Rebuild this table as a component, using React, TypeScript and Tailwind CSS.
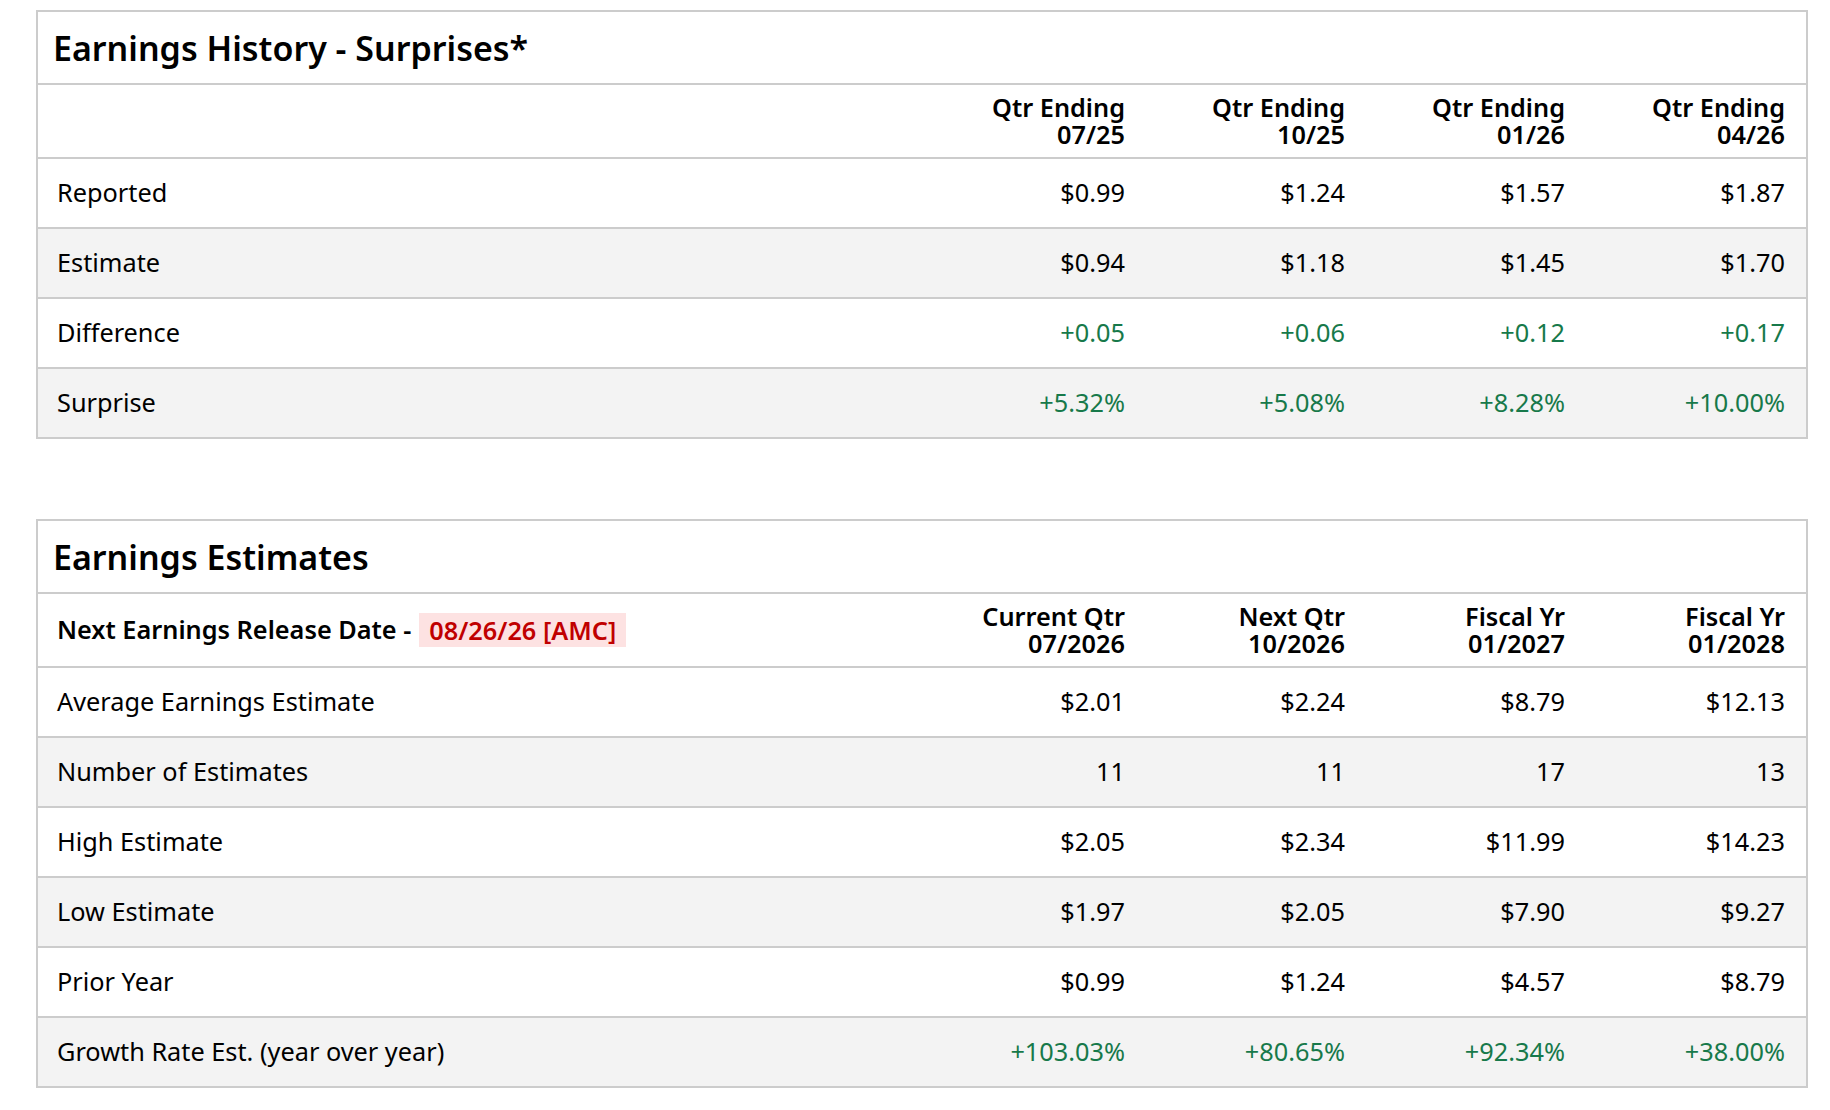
import React from "react";

type Row = { label: string; values: string[]; green?: boolean };

const history: Row[] = [
  { label: "Reported", values: ["$0.99", "$1.24", "$1.57", "$1.87"] },
  { label: "Estimate", values: ["$0.94", "$1.18", "$1.45", "$1.70"] },
  { label: "Difference", values: ["+0.05", "+0.06", "+0.12", "+0.17"], green: true },
  { label: "Surprise", values: ["+5.32%", "+5.08%", "+8.28%", "+10.00%"], green: true },
];

const estimates: Row[] = [
  { label: "Average Earnings Estimate", values: ["$2.01", "$2.24", "$8.79", "$12.13"] },
  { label: "Number of Estimates", values: ["11", "11", "17", "13"] },
  { label: "High Estimate", values: ["$2.05", "$2.34", "$11.99", "$14.23"] },
  { label: "Low Estimate", values: ["$1.97", "$2.05", "$7.90", "$9.27"] },
  { label: "Prior Year", values: ["$0.99", "$1.24", "$4.57", "$8.79"] },
  {
    label: "Growth Rate Est. (year over year)",
    values: ["+103.03%", "+80.65%", "+92.34%", "+38.00%"],
    green: true,
  },
];

function HeaderCell({ top, bottom }: { top: string; bottom: string }) {
  return (
    <div className="flex flex-col items-end justify-center pr-[21px] text-right font-semibold leading-[27px]">
      <span>{top}</span>
      <span>{bottom}</span>
    </div>
  );
}

function DataRows({ rows }: { rows: Row[] }) {
  return (
    <>
      {rows.map((row, i) => {
        const last = i === rows.length - 1;
        return (
          <div
            key={row.label}
            className={
              "grid grid-cols-[1fr_220px_220px_220px_220px] " +
              (last ? "h-[68px] " : "h-[70px] border-b-2 border-[#cccccc] ") +
              (i % 2 === 1 ? "bg-[#f3f3f3]" : "bg-white")
            }
          >
            <div className="flex items-center pl-[19px]">{row.label}</div>
            {row.values.map((v, j) => (
              <div
                key={j}
                className={
                  "flex items-center justify-end pr-[21px] " +
                  (row.green ? "text-[#17794a]" : "text-black")
                }
              >
                {v}
              </div>
            ))}
          </div>
        );
      })}
    </>
  );
}

function Panel({
  title,
  header,
  rows,
  className,
}: {
  title: string;
  header: React.ReactNode;
  rows: Row[];
  className?: string;
}) {
  return (
    <section className={"border-2 border-[#cccccc] bg-white " + (className ?? "")}>
      <div className="flex h-[73px] items-center border-b-2 border-[#cccccc] pl-[15px]">
        <h2 className="text-[34px] font-semibold leading-none">{title}</h2>
      </div>
      <div className="grid h-[74px] grid-cols-[1fr_220px_220px_220px_220px] border-b-2 border-[#cccccc]">
        {header}
      </div>
      <DataRows rows={rows} />
    </section>
  );
}

export default function App() {
  return (
    <div
      className="min-h-screen w-[1830px] bg-white text-[25.3px] text-black"
      style={{ fontFamily: '"Noto Sans", "Open Sans", sans-serif' }}
    >
      <div className="ml-[36px] w-[1772px] pt-[10px]">
        <Panel
          title="Earnings History - Surprises*"
          rows={history}
          header={
            <>
              <div />
              <HeaderCell top="Qtr Ending" bottom="07/25" />
              <HeaderCell top="Qtr Ending" bottom="10/25" />
              <HeaderCell top="Qtr Ending" bottom="01/26" />
              <HeaderCell top="Qtr Ending" bottom="04/26" />
            </>
          }
        />

        <Panel
          className="mt-[80px]"
          title="Earnings Estimates"
          rows={estimates}
          header={
            <>
              <div className="flex items-center pl-[19px] font-semibold">
                <span>Next Earnings Release Date -</span>
                <span className="ml-[8px] bg-[#fde2e2] px-[10px] leading-[34px] text-[#c00000]">
                  08/26/26 [AMC]
                </span>
              </div>
              <HeaderCell top="Current Qtr" bottom="07/2026" />
              <HeaderCell top="Next Qtr" bottom="10/2026" />
              <HeaderCell top="Fiscal Yr" bottom="01/2027" />
              <HeaderCell top="Fiscal Yr" bottom="01/2028" />
            </>
          }
        />
      </div>
    </div>
  );
}
